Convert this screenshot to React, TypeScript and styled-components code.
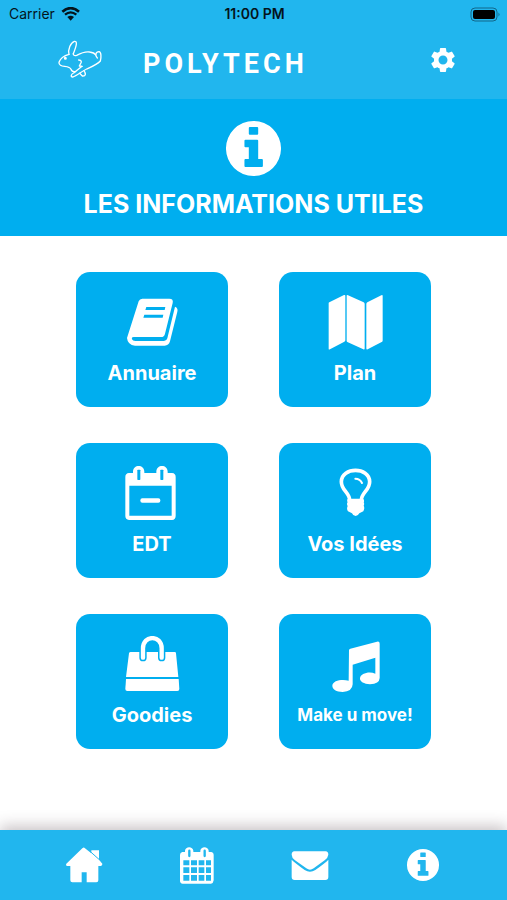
import React from "react";
import styled, { createGlobalStyle } from "styled-components";
import { MdSettings } from "react-icons/md";

const colors = {
  bar: "#21b6ee",
  main: "#00aeef",
  ink: "#04141c",
};

const GlobalStyle = createGlobalStyle`
  *, *::before, *::after { box-sizing: border-box; }
  body {
    margin: 0;
    background: #fff;
    font-family: Inter, "Liberation Sans", sans-serif;
  }
`;

const Page = styled.div`
  display: flex;
  flex-direction: column;
  min-height: 100vh;
`;

const Header = styled.header`
  background: ${colors.bar};
  color: #fff;
`;

const StatusBar = styled.div`
  display: grid;
  grid-template-columns: 1fr auto 1fr;
  align-items: center;
  height: 28px;
  padding: 0 7px 0 9px;
  color: ${colors.ink};
  font-size: 14px;
  line-height: 20px;
`;

const Carrier = styled.span`
  display: flex;
  align-items: center;
  gap: 6px;
`;

const Clock = styled.time`
  font-size: 14px;
  font-weight: 600;
`;

const BatterySlot = styled.span`
  display: flex;
  justify-content: flex-end;
`;

const TitleBar = styled.div`
  display: flex;
  align-items: center;
  height: 71px;
  padding: 0 49px 8px 57px;
`;

const Brand = styled.h1`
  flex: 1;
  margin: 0;
  padding: 9px 0 0 40px;
  font-family: Roboto, sans-serif;
  font-size: 27px;
  font-weight: 700;
  line-height: 32px;
  letter-spacing: 4px;
`;

const IconButton = styled.button`
  display: flex;
  padding: 0;
  border: 0;
  background: none;
  color: #fff;
  cursor: pointer;
`;

const Banner = styled.section`
  display: flex;
  flex-direction: column;
  align-items: center;
  gap: 12px;
  padding: 22px 16px 16px;
  background: ${colors.main};
  color: #fff;
`;

const BannerTitle = styled.h2`
  margin: 0;
  font-size: 25px;
  font-weight: 700;
  line-height: 32px;
  text-align: center;
`;

const Tiles = styled.main`
  flex: 1;
  display: grid;
  grid-template-columns: 1fr 1fr;
  align-content: start;
  gap: 36px 51px;
  padding: 36px 15%;
`;

const Tile = styled.button<{ $compact?: boolean }>`
  display: flex;
  flex-direction: column;
  align-items: center;
  gap: 10px;
  height: 135px;
  padding: 22px 0 0;
  border: 0;
  border-radius: 14px;
  background: ${colors.main};
  color: #fff;
  font-family: inherit;
  font-size: ${(p) => (p.$compact ? 17 : 20)}px;
  font-weight: 700;
  line-height: 26px;
  white-space: nowrap;
  cursor: pointer;
`;

const TabBar = styled.nav`
  display: grid;
  grid-template-columns: repeat(4, 1fr);
  align-items: center;
  height: 70px;
  padding: 0 28px;
  background: ${colors.bar};
  box-shadow: 0 -4px 14px rgba(60, 40, 50, 0.28);
`;

const Tab = styled.a`
  display: flex;
  justify-content: center;
  color: #fff;
`;

const Wifi = () => (
  <svg width="19" height="15" viewBox="184 18 57 45" fill="none" stroke={colors.ink} aria-hidden="true">
    <path d="M188 32Q213 11 238 32" strokeWidth="8" />
    <path d="M196 41Q213 27 230 41" strokeWidth="7" />
    <path d="M203 48Q213 40 223 48L213 59Z" fill={colors.ink} stroke="none" />
  </svg>
);

const Battery = () => (
  <svg width="30" height="15" viewBox="0 0 30 15" aria-label="Battery full" role="img">
    <rect x="1" y="1" width="26" height="13" rx="4" fill="none" stroke="#12678a" />
    <rect x="3" y="3" width="22" height="9" rx="2" fill="#000" />
    <path d="M28.5 5.5Q30.5 7.5 28.5 9.5Z" fill="#12678a" />
  </svg>
);

const Rabbit = () => (
  <svg
    width="46"
    height="40"
    viewBox="171 117 138 120"
    fill="none"
    stroke="#fff"
    strokeWidth="4"
    strokeLinejoin="round"
    strokeLinecap="round"
    aria-hidden="true"
  >
    <path d="M207 160C203 145 212 125 223 121C233 120 230 133 220 158" />
    <path d="M207 160C195 163 181 172 177 184C176 192 184 195 194 196C204 197 211 199 213 205C215 211 221 213 227 212" />
    <path d="M220 158C219 162 223 165 230 163C243 156 255 151 269 153C278 154 284 157 287 162" />
    <path d="M292 171C284 163 287 152 297 152C304 153 304 168 301 180C293 190 276 197 260 204C243 212 231 225 218 228C211 228 213 219 221 216L246 196" />
    <path d="M236 177C245 177 246 183 241 189L238 195L246 196" />
    <path d="M239 217L247 225C258 226 258 218 252 209" />
    <circle cx="196" cy="172" r="2.5" fill="#fff" />
  </svg>
);

const InfoIcon = ({ size }: { size: number }) => (
  <svg width={size} height={size} viewBox="0 0 164 164" fill="currentColor" aria-hidden="true">
    <path
      fillRule="evenodd"
      d="M82 0a82 82 0 1 1 0 164a82 82 0 1 1 0-164ZM71 18Q68 18 68 21V38Q68 41 71 41H93Q96 41 96 38V21Q96 18 93 18ZM58 56Q55 56 55 59V75Q55 78 58 78H68V113H58Q55 113 55 116V134Q55 137 58 137H107Q110 137 110 134V116Q110 113 107 113H96V59Q96 56 93 56Z"
    />
  </svg>
);

const TileIcon = ({ children }: { children: React.ReactNode }) => (
  <svg width="56" height="56" viewBox="-2 0 168 168" fill="#fff" aria-hidden="true">
    {children}
  </svg>
);

const Book = () => (
  <TileIcon>
    <path d="M53 14H134Q147 14 144 27L121 119Q119 129 109 129H27Q20 129 22 136Q24 141 32 141H118Q126 141 128 133L151 38Q161 42 158 53L136 142Q132 155 120 155H31Q9 153 7 132L42 22Q45 14 53 14Z" />
    <path d="M65 39H122L120 48H62ZM59 62H116L114 71H56Z" fill={colors.main} />
  </TileIcon>
);

const MapIcon = () => (
  <TileIcon>
    <path d="M3 28Q2 26 5 25L49 3Q53 2 53 5V139Q53 142 50 143L7 166Q3 168 3 164Z" />
    <path d="M57 5Q57 2 61 4L108 25Q111 27 111 30V163Q111 168 107 166L59 144Q57 143 57 140Z" />
    <path d="M116 30Q116 27 119 25L161 4Q165 2 165 6V140Q165 143 162 144L120 166Q116 168 116 163Z" />
  </TileIcon>
);

const Schedule = () => (
  <TileIcon>
    <path
      fillRule="evenodd"
      d="M13 24H25V20C25 -3 59 -3 59 20V24H95V20C95 -3 129 -3 129 20V24H142Q153 25 153 36V152Q153 164 142 165H13Q2 164 2 153V36Q2 25 13 24ZM14 62V152H141V62Z"
    />
    <rect x="38" y="14" width="9" height="31" rx="2" fill={colors.main} />
    <rect x="107" y="14" width="9" height="31" rx="2" fill={colors.main} />
    <rect x="47" y="100" width="60" height="13" rx="6" />
  </TileIcon>
);

const Bulb = () => (
  <TileIcon>
    <path
      d="M66 107C67 83 41 77 41 50C42 5 125 5 126 50C126 77 100 83 101 107Z"
      fill="none"
      stroke="#fff"
      strokeWidth="11"
    />
    <path d="M60 102H107Q111 107 108 112Q111 117 108 122Q112 129 107 139L95 145Q91 153 84 153Q76 153 73 145L61 139Q56 132 60 123Q56 117 60 112Q57 106 60 102Z" />
    <path d="M83 41Q97 41 103 54" fill="none" stroke="#fff" strokeWidth="6" strokeLinecap="round" />
  </TileIcon>
);

const Bag = () => (
  <TileIcon>
    <path d="M18 48H150Q154 48 154 52L161 123H4L13 52Q14 48 18 48Z" />
    <path d="M4 129H162L164 158Q164 165 158 165H8Q2 165 2 159Z" />
    <path d="M55 65V37C55 -4 111 -4 111 37V65" fill="none" stroke={colors.main} strokeWidth="22" strokeLinecap="round" />
    <path d="M55 65V37C55 -4 111 -4 111 37V65" fill="none" stroke="#fff" strokeWidth="13" strokeLinecap="round" />
  </TileIcon>
);

const Music = () => (
  <TileIcon>
    <path d="M64 42Q65 39 68 38L148 17Q156 15 156 23V126Q155 144 127 145C109 144 96 137 97 127C98 112 125 105 143 113V65L75 86V145Q74 167 45 168C26 167 14 160 14 149C15 133 43 129 63 134Z" />
  </TileIcon>
);

const Home = () => (
  <svg width="38" height="38" viewBox="197 108 114 114" fill="currentColor" aria-hidden="true">
    <path d="M255 113L276 130V121H299V149L309 161Q310 167 304 168H297V211Q297 217 291 217H262V187H247V217H219Q213 217 213 211V168H204Q198 167 201 161L249 115Q252 112 255 113Z" />
    <path d="M272 124L300 149" stroke={colors.bar} strokeWidth="3" />
  </svg>
);

const Calendar = () => (
  <svg width="36" height="38" viewBox="538 107 108 114" aria-hidden="true">
    <path
      fill="currentColor"
      d="M548 125H556V121C557 107 580 107 581 121V125H602V121C603 107 626 107 627 121V125H634Q642 126 642 134V210Q641 219 634 220H549Q541 219 541 211V134Q541 126 548 125Z"
    />
    <path
      d="M551 150h18v15h-18zM574 150h18v15h-18zM597 150h17v15h-17zM619 150h15v15h-15zM551 171h18v17h-18zM574 171h18v17h-18zM597 171h17v17h-17zM619 171h15v17h-15zM551 194h18v17h-18zM574 194h18v17h-18zM597 194h17v17h-17zM619 194h15v17h-15z"
      fill={colors.bar}
    />
    <path d="M569 121V137M615 121V137" stroke={colors.bar} strokeWidth="7" strokeLinecap="round" />
  </svg>
);

const Mail = () => (
  <svg width="38" height="30" viewBox="116 122 114 90" fill="currentColor" aria-hidden="true">
    <path d="M126 126H220Q228 127 228 136Q227 145 217 153L184 177Q173 185 162 177L128 153Q118 145 118 136Q118 127 126 126Z" />
    <path d="M118 151Q126 159 157 182Q173 193 189 182Q221 159 228 151V203Q228 212 219 212H127Q118 212 118 203Z" />
  </svg>
);

const tiles = [
  { label: "Annuaire", Icon: Book },
  { label: "Plan", Icon: MapIcon },
  { label: "EDT", Icon: Schedule },
  { label: "Vos Idées", Icon: Bulb },
  { label: "Goodies", Icon: Bag },
  { label: "Make u move!", Icon: Music, compact: true },
];

export default function App() {
  return (
    <Page>
      <GlobalStyle />
      <Header>
        <StatusBar>
          <Carrier>
            Carrier <Wifi />
          </Carrier>
          <Clock>11:00 PM</Clock>
          <BatterySlot>
            <Battery />
          </BatterySlot>
        </StatusBar>
        <TitleBar>
          <Rabbit />
          <Brand>POLYTECH</Brand>
          <IconButton type="button" aria-label="Réglages">
            <MdSettings size={30} />
          </IconButton>
        </TitleBar>
      </Header>
      <Banner>
        <InfoIcon size={55} />
        <BannerTitle>LES INFORMATIONS UTILES</BannerTitle>
      </Banner>
      <Tiles>
        {tiles.map(({ label, Icon, compact }) => (
          <Tile key={label} type="button" $compact={compact}>
            <Icon />
            {label}
          </Tile>
        ))}
      </Tiles>
      <TabBar>
        <Tab href="#accueil" aria-label="Accueil">
          <Home />
        </Tab>
        <Tab href="#calendrier" aria-label="Calendrier">
          <Calendar />
        </Tab>
        <Tab href="#messages" aria-label="Messages">
          <Mail />
        </Tab>
        <Tab href="#informations" aria-label="Informations">
          <InfoIcon size={32} />
        </Tab>
      </TabBar>
    </Page>
  );
}
